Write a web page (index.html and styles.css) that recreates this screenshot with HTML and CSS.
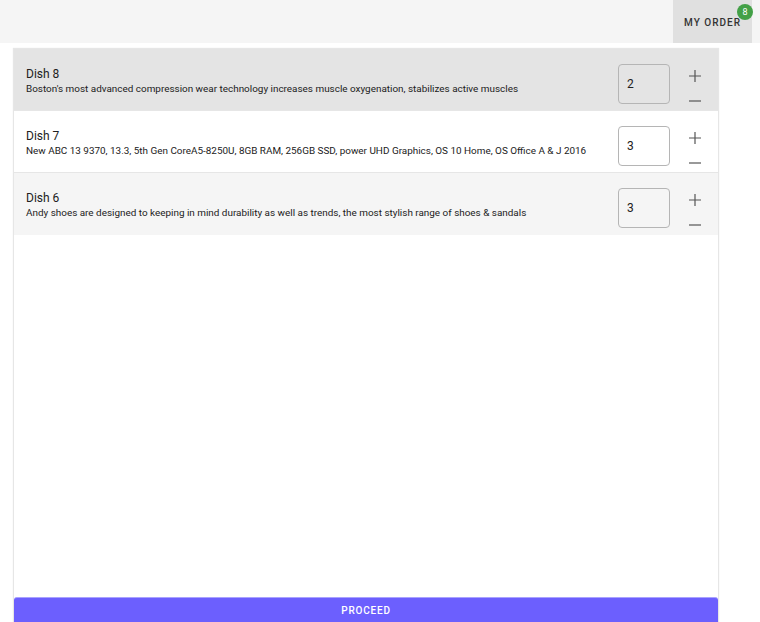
FILE: index.html
```html
<!DOCTYPE html>
<html>
<head>
<meta charset="utf-8">
<link rel="stylesheet" href="styles.css">
</head>
<body>
<header class="topbar">
  <button class="order-btn">MY ORDER<span class="badge">8</span></button>
</header>
<main class="panel">
  <div class="list">
    <div class="row row-selected">
      <div class="info">
        <div class="title">Dish 8</div>
        <div class="desc">Boston's most advanced compression wear technology increases muscle oxygenation, stabilizes active muscles</div>
      </div>
      <div class="qty">2</div>
      <div class="steps">
        <svg class="icon" viewBox="0 0 14 14"><path d="M7 1v12M1 7h12" stroke="#555" stroke-width="1.2" fill="none"/></svg>
        <svg class="icon" viewBox="0 0 14 14"><path d="M1 7h12" stroke="#555" stroke-width="1.2" fill="none"/></svg>
      </div>
    </div>
    <div class="row">
      <div class="info">
        <div class="title">Dish 7</div>
        <div class="desc">New ABC 13 9370, 13.3, 5th Gen CoreA5-8250U, 8GB RAM, 256GB SSD, power UHD Graphics, OS 10 Home, OS Office A &amp; J 2016</div>
      </div>
      <div class="qty">3</div>
      <div class="steps">
        <svg class="icon" viewBox="0 0 14 14"><path d="M7 1v12M1 7h12" stroke="#555" stroke-width="1.2" fill="none"/></svg>
        <svg class="icon" viewBox="0 0 14 14"><path d="M1 7h12" stroke="#555" stroke-width="1.2" fill="none"/></svg>
      </div>
    </div>
    <div class="row row-alt">
      <div class="info">
        <div class="title">Dish 6</div>
        <div class="desc">Andy shoes are designed to keeping in mind durability as well as trends, the most stylish range of shoes &amp; sandals</div>
      </div>
      <div class="qty">3</div>
      <div class="steps">
        <svg class="icon" viewBox="0 0 14 14"><path d="M7 1v12M1 7h12" stroke="#555" stroke-width="1.2" fill="none"/></svg>
        <svg class="icon" viewBox="0 0 14 14"><path d="M1 7h12" stroke="#555" stroke-width="1.2" fill="none"/></svg>
      </div>
    </div>
  </div>
  <button class="proceed">PROCEED</button>
</main>
</body>
</html>
```
FILE: styles.css
```css
* { box-sizing: border-box; }
html, body { margin: 0; padding: 0; height: 100%; overflow: hidden; }
body {
  font-family: Roboto, "Liberation Sans", sans-serif;
  color: #212121;
  background: #fff;
}
.topbar {
  height: 43px;
  background: #f5f5f5;
  display: flex;
  justify-content: flex-end;
  padding-right: 8px;
}
.order-btn {
  position: relative;
  width: 79px;
  height: 43px;
  border: none;
  background: #e0e0e0;
  font-family: Roboto, "Liberation Sans", sans-serif;
  font-size: 10px;
  font-weight: 500;
  letter-spacing: 1px;
  color: #333;
  padding: 0;
  padding-top: 1px;
}
.badge {
  position: absolute;
  top: 4px;
  right: -1px;
  width: 16px;
  height: 16px;
  border-radius: 50%;
  background: #43a047;
  color: #fff;
  font-size: 9px;
  font-weight: 400;
  letter-spacing: 0;
  line-height: 16px;
  text-align: center;
}
.panel {
  margin: 6px 0 0 14px;
  width: 704px;
  background: #fff;
  box-shadow: 0 0 1px 1px #e6e6e6;
  display: flex;
  flex-direction: column;
}
.list { height: 548px; flex: none; }
.row {
  height: 62px;
  display: flex;
  align-items: flex-start;
  border-bottom: 1px solid #e6e6e6;
  padding-left: 12px;
  background: #fff;
}
.row-selected { background: #e4e4e4; }
.row-alt { background: #f5f5f5; border-bottom: none; }
.info {
  flex: 1;
  padding-top: 17px;
}
.title {
  font-size: 12px;
  line-height: 16px;
}
.desc {
  font-size: 9.92px;
  line-height: 14px;
}
.qty {
  width: 52px;
  height: 40px;
  margin-top: 15px;
  border: 1px solid #b5b5b5;
  border-radius: 4px;
  font-size: 12px;
  line-height: 38px;
  padding-left: 8px;
  flex: none;
}
.steps {
  width: 48px;
  flex: none;
  display: flex;
  flex-direction: column;
  align-items: center;
  padding-top: 20px;
  padding-left: 1px;
  gap: 11px;
}
.icon { width: 14px; height: 14px; display: block; }
.proceed {
  height: 36px;
  margin: 0;
  border: none;
  border-top: 1px solid #a9a2ff;
  border-radius: 3px 3px 0 0;
  background: #6c5ffe;
  color: #fff;
  font-family: Roboto, "Liberation Sans", sans-serif;
  font-size: 10px;
  font-weight: 500;
  letter-spacing: 0.8px;
  padding-bottom: 12px;
  flex: none;
}
```
